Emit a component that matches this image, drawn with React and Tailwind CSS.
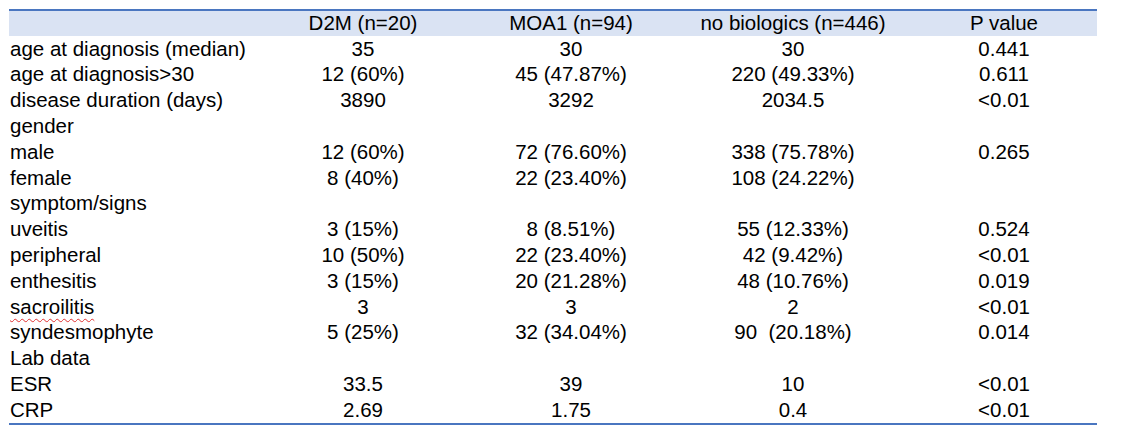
import React from "react";

const rows = [
  ["age at diagnosis (median)", "35", "30", "30", "0.441"],
  ["age at diagnosis>30", "12 (60%)", "45 (47.87%)", "220 (49.33%)", "0.611"],
  ["disease duration (days)", "3890", "3292", "2034.5", "<0.01"],
  ["gender", "", "", "", ""],
  ["male", "12 (60%)", "72 (76.60%)", "338 (75.78%)", "0.265"],
  ["female", "8 (40%)", "22 (23.40%)", "108 (24.22%)", ""],
  ["symptom/signs", "", "", "", ""],
  ["uveitis", "3 (15%)", "8 (8.51%)", "55 (12.33%)", "0.524"],
  ["peripheral", "10 (50%)", "22 (23.40%)", "42 (9.42%)", "<0.01"],
  ["enthesitis", "3 (15%)", "20 (21.28%)", "48 (10.76%)", "0.019"],
  ["sacroilitis", "3", "3", "2", "<0.01"],
  ["syndesmophyte", "5 (25%)", "32 (34.04%)", "90\u00a0 (20.18%)", "0.014"],
  ["Lab data", "", "", "", ""],
  ["ESR", "33.5", "39", "10", "<0.01"],
  ["CRP", "2.69", "1.75", "0.4", "<0.01"],
];

function Row({ cells, header }) {
  return (
    <div
      className={
        "grid grid-cols-[250px_208px_208px_236px_186px] items-center " +
        (header ? "h-[25px] bg-[#dae3f3]" : "h-[25.8px]")
      }
    >
      {cells.map((c, i) => (
        <div
          key={i}
          className={
            "whitespace-pre leading-none " + (i === 0 ? "pl-px text-left" : "text-center")
          }
        >
          {c === "sacroilitis" ? (
            <span className="underline decoration-wavy decoration-[#e03030] decoration-1 underline-offset-[4px]">
              {c}
            </span>
          ) : (
            c
          )}
        </div>
      ))}
    </div>
  );
}

export default function App() {
  return (
    <div className="w-[1123px] h-[432px] bg-white pt-[9px] pl-[9px] text-[20.5px] text-black font-['Liberation_Sans',Arial,sans-serif]">
      <div className="w-[1088px] border-t-2 border-b-2 border-[#4a76c0]">
        <Row header cells={["", "D2M (n=20)", "MOA1 (n=94)", "no biologics (n=446)", "P value"]} />
        {rows.map((r, i) => (
          <Row key={i} cells={r} />
        ))}
      </div>
    </div>
  );
}
